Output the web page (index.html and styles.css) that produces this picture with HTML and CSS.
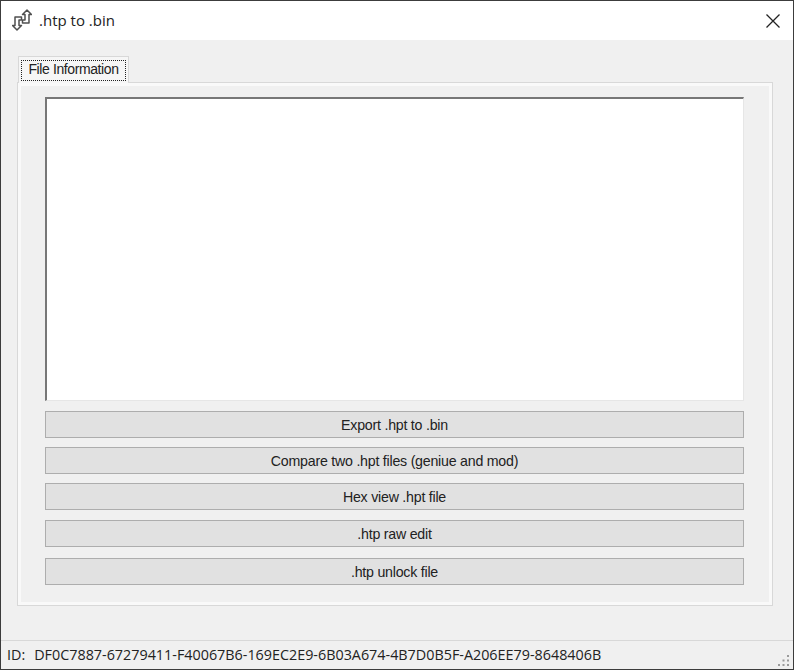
FILE: index.html
```html
<!DOCTYPE html>
<html lang="en">
<head>
    <meta charset="UTF-8">
    <title>.htp to .bin</title>
    <link rel="stylesheet" href="styles.css">
</head>
<body>

<div class="window">
    <div class="titlebar">
        <svg class="app-icon" width="20" height="22" viewBox="0 0 20 22" fill="#fff" stroke="#505050" stroke-width="1.5" stroke-linejoin="round">
            <path d="M15 1L19.500 5.500H17V14H10.500V11H13V5.500H10.500Z"/>
            <path d="M5 21L0.500 16.500H3V8H9.500V11H7V16.500H9.500Z"/>
        </svg>
        <span class="title">.htp to .bin</span>
        <svg class="close" width="14" height="14" viewBox="0 0 14 14" stroke="#222" stroke-width="1.300">
            <path d="M0.500 0.500l13 13M13.500 0.500l-13 13"/>
        </svg>
    </div>

    <div class="content">
        <div class="tabs">
            <div class="tab"><span class="tab-label">File Information</span></div>
        </div>
        <div class="panel">
            <div class="textbox"></div>
            <button class="action first">Export .hpt to .bin</button>
            <button class="action second">Compare two .hpt files (geniue and mod)</button>
            <button class="action third">Hex view .hpt file</button>
            <button class="action fourth">.htp raw edit</button>
            <button class="action fifth">.htp unlock file</button>
        </div>
    </div>

    <div class="statusbar">
        <span class="id-label">ID:</span>
        <span class="id-value">DF0C7887-67279411-F40067B6-169EC2E9-6B03A674-4B7D0B5F-A206EE79-8648406B</span>
        <svg class="grip" width="13" height="13" viewBox="0 0 13 13" fill="#9a9a9a">
            <rect x="10" y="0" width="2" height="2"/>
            <rect x="5.500" y="4.500" width="2" height="2"/>
            <rect x="10" y="4.500" width="2" height="2"/>
            <rect x="1" y="9" width="2" height="2"/>
            <rect x="5.500" y="9" width="2" height="2"/>
            <rect x="10" y="9" width="2" height="2"/>
        </svg>
    </div>
</div>

</body>
</html>
```

FILE: styles.css
```css
html, body {
    margin: 0;
    padding: 0;
}
body {
    width: 794px;
    height: 670px;
    overflow: hidden;
    background-color: #f0f0f0;
}
.window {
    box-sizing: border-box;
    width: 794px;
    height: 670px;
    display: flex;
    flex-direction: column;
    background-color: #f0f0f0;
    border: 1px solid #3c3c3c;
}
.titlebar {
    height: 39px;
    flex: none;
    display: flex;
    align-items: center;
    padding: 0 13px 0 11px;
    background-color: #ffffff;
}
.app-icon {
    flex: none;
    margin-top: -2px;
}
.title {
    margin-left: 7px;
    margin-top: -2px;
    font-family: "Open Sans", sans-serif;
    font-size: 15px;
    color: #222;
}
.close {
    margin-left: auto;
}
.content {
    flex: 1;
    padding: 16px 20px 0 16px;
}
.tabs {
    display: flex;
    padding-left: 1px;
    height: 26px;
}
.tab {
    box-sizing: border-box;
    width: 111px;
    height: 27px;
    padding: 3px 2px 0 2px;
    background-color: #f6f6f6;
    border: 1px solid #d8d8d8;
    border-bottom: none;
    position: relative;
    z-index: 1;
}
.tab-label {
    display: block;
    box-sizing: border-box;
    height: 21px;
    line-height: 17px;
    text-align: center;
    font-family: "Liberation Sans", Arial, sans-serif;
    font-size: 14px;
    letter-spacing: -0.4px;
    color: #222;
    border: 1px dotted #222;
}
.panel {
    box-sizing: border-box;
    height: 524px;
    padding: 14px 28px 0 27px;
    background-color: #f0f0f0;
    border: 1px solid #d8d8d8;
    box-shadow: inset 0 0 0 3px #f9f9f9;
}
.textbox {
    box-sizing: border-box;
    height: 304px;
    background-color: #ffffff;
    border-top: 2px solid #777;
    border-left: 2px solid #777;
    border-right: 1px solid #e6e6e6;
    border-bottom: 1px solid #e6e6e6;
    margin-bottom: 10px;
}
.action {
    display: block;
    box-sizing: border-box;
    width: 100%;
    height: 27px;
    padding: 1px 0 0 0;
    background-color: #e1e1e1;
    border: 1px solid #adadad;
    font-family: "Liberation Sans", Arial, sans-serif;
    font-size: 14.2px;
    letter-spacing: -0.23px;
    color: #222;
}
.second, .third {
    margin-top: 9px;
}
.fourth {
    margin-top: 10px;
}
.fifth {
    margin-top: 11px;
}
.statusbar {
    flex: none;
    height: 29px;
    box-sizing: border-box;
    display: flex;
    align-items: center;
    padding: 0 3px 2px 6px;
    border-top: 1px solid #d8d8d8;
    font-family: "Open Sans", sans-serif;
    font-size: 14.35px;
    color: #222;
}
.id-value {
    margin-left: 9px;
}
.grip {
    margin-left: auto;
    align-self: flex-end;
    margin-bottom: -1px;
}
```
